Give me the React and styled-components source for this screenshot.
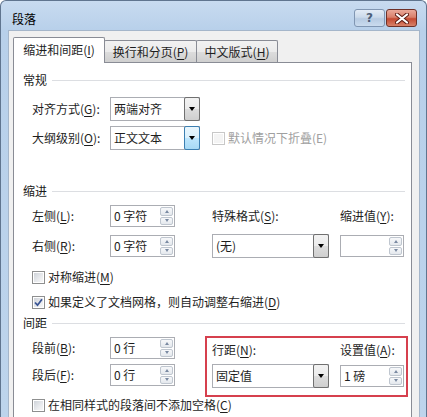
import React from "react";
import styled, { createGlobalStyle, css } from "styled-components";

const GlobalStyle = createGlobalStyle`
  html, body {
    margin: 0;
    padding: 0;
    background: #ffffff;
  }
  body {
    font-family: "Noto Sans CJK SC", "Noto Sans", sans-serif;
    font-size: 12px;
    color: #1e1e1e;
  }
  * {
    box-sizing: border-box;
  }
`;

function App() {
  return (
    <>
      <GlobalStyle />
      <Window>
        <TitleBar>
          <Title>段落</Title>
          <CaptionButtons>
            <CaptionButton $variant="help">
              <HelpGlyph>?</HelpGlyph>
            </CaptionButton>
            <CaptionButton $variant="close">
              <svg width="14" height="11" viewBox="0 0 14 11">
                <path
                  d="M2 1.5 L12 9.5 M12 1.5 L2 9.5"
                  stroke="#5a1a12"
                  strokeWidth="4"
                  strokeLinecap="round"
                />
                <path
                  d="M2 1.5 L12 9.5 M12 1.5 L2 9.5"
                  stroke="#ffffff"
                  strokeWidth="2.2"
                  strokeLinecap="round"
                />
              </svg>
            </CaptionButton>
          </CaptionButtons>
        </TitleBar>

        <Body>
          <TabList>
            <Tab $active $width={92}>
              缩进和间距(<U>I</U>)
            </Tab>
            <Tab $width={93}>
              换行和分页(<U>P</U>)
            </Tab>
            <Tab $width={82}>
              中文版式(<U>H</U>)
            </Tab>
          </TabList>

          <Panel>
            <SectionHeader $top={9}>
              <span>常规</span>
              <Rule />
            </SectionHeader>
            <Row $top={9}>
              <FieldLabel>
                对齐方式(<U>G</U>):
              </FieldLabel>
              <Select width={90} value="两端对齐" />
            </Row>
            <Row $top={5}>
              <FieldLabel>
                大纲级别(<U>O</U>):
              </FieldLabel>
              <Select width={90} value="正文文本" focused />
              <CheckItem $gap={3} $left={12}>
                <CheckBox disabled />
                <DisabledText>默认情况下折叠(E)</DisabledText>
              </CheckItem>
            </Row>

            <SectionHeader $top={33}>
              <span>缩进</span>
              <Rule />
            </SectionHeader>
            <IndentGrid>
              <FieldLabel>
                左侧(<U>L</U>):
              </FieldLabel>
              <Spinner width={65} value="0 字符" />
              <FieldLabel>
                特殊格式(<U>S</U>):
              </FieldLabel>
              <FieldLabel>
                缩进值(<U>Y</U>):
              </FieldLabel>

              <FieldLabel>
                右侧(<U>R</U>):
              </FieldLabel>
              <Spinner width={65} value="0 字符" />
              <Select width={117} value="(无)" />
              <Spinner width={64} value="" />
            </IndentGrid>

            <CheckRow $top={11}>
              <CheckBox />
              <span>
                对称缩进(<U>M</U>)
              </span>
            </CheckRow>
            <CheckRow $top={9}>
              <CheckBox checked />
              <span>
                如果定义了文档网格，则自动调整右缩进(<U>D</U>)
              </span>
            </CheckRow>

            <SectionHeader $top={5}>
              <span>间距</span>
              <Rule />
            </SectionHeader>
            <SpacingBlock>
              <SpacingColumn>
                <Row>
                  <FieldLabel>
                    段前(<U>B</U>):
                  </FieldLabel>
                  <Spinner width={65} value="0 行" />
                </Row>
                <Row>
                  <FieldLabel>
                    段后(<U>F</U>):
                  </FieldLabel>
                  <Spinner width={65} value="0 行" />
                </Row>
              </SpacingColumn>
              <Highlight>
                <FieldLabel>
                  行距(<U>N</U>):
                </FieldLabel>
                <FieldLabel>
                  设置值(<U>A</U>):
                </FieldLabel>
                <Select width={117} value="固定值" />
                <Spinner width={64} value="1 磅" />
              </Highlight>
            </SpacingBlock>
            <CheckRow $top={0}>
              <CheckBox />
              <span>
                在相同样式的段落间不添加空格(<U>C</U>)
              </span>
            </CheckRow>
          </Panel>
        </Body>
      </Window>
    </>
  );
}

function Select({ width, value, focused }) {
  return (
    <SelectBox style={{ width }}>
      <FieldText>{value}</FieldText>
      <DropButton $focused={focused}>
        <DownArrow />
      </DropButton>
    </SelectBox>
  );
}

function Spinner({ width, value }) {
  return (
    <SpinBox style={{ width }}>
      <FieldText>{value}</FieldText>
      <SpinButtons>
        <SpinButton>
          <SpinArrow $up />
        </SpinButton>
        <SpinButton>
          <SpinArrow />
        </SpinButton>
      </SpinButtons>
    </SpinBox>
  );
}

function CheckBox({ checked, disabled }) {
  return (
    <Box $disabled={disabled}>
      <BoxInner $disabled={disabled}>
        {checked && (
          <svg width="9" height="9" viewBox="0 0 9 9">
            <path
              d="M1 4.5 L3.5 7.2 L8 1.2"
              fill="none"
              stroke="#3b5695"
              strokeWidth="1.8"
            />
          </svg>
        )}
      </BoxInner>
    </Box>
  );
}

// STYLES FOR COMPONENTS
const Window = styled.div`
  width: 427px;
  height: 417px;
  overflow: hidden;
  display: flex;
  flex-direction: column;
  background: linear-gradient(180deg, #c8dbf0 0%, #b8d0ea 29px, #bdd4ec 100%);
  border: 1px solid #60758f;
  border-bottom: none;
  border-radius: 6px 6px 0 0;
`;

const TitleBar = styled.div`
  height: 29px;
  flex-shrink: 0;
  display: flex;
  justify-content: space-between;
  align-items: flex-start;
  padding: 0 9px 0 11px;
`;

const Title = styled.div`
  margin-top: 10px;
  line-height: 16px;
  color: #000000;
`;

const CaptionButtons = styled.div`
  display: flex;
  gap: 1px;
  margin-top: 8px;
`;

const CaptionButton = styled.div`
  width: 31px;
  height: 18px;
  border-radius: 3px;
  display: flex;
  align-items: center;
  justify-content: center;
  ${({ $variant }) =>
    $variant === "close"
      ? css`
          border: 1px solid #6e3128;
          background: linear-gradient(
            180deg,
            #eaa99a 0%,
            #d9806b 45%,
            #c44a32 55%,
            #d8826a 100%
          );
        `
      : css`
          border: 1px solid #8096b2;
          background: linear-gradient(
            180deg,
            #e3ecf6 0%,
            #cbdaea 45%,
            #b7cbe2 55%,
            #cadbee 100%
          );
        `}
`;

const HelpGlyph = styled.span`
  font-family: "DejaVu Sans", sans-serif;
  font-weight: bold;
  font-size: 12px;
  line-height: 12px;
  color: #4d5f78;
`;

const Body = styled.div`
  flex: 1;
  display: flex;
  flex-direction: column;
  margin: 0 6px 0 7px;
  padding: 6px 7px 0 4px;
  background: #f0f0f0;
  border: 1px solid #a5b6ca;
  border-bottom: none;
`;

const TabList = styled.div`
  display: flex;
  align-items: flex-end;
  height: 25px;
  flex-shrink: 0;
`;

const Tab = styled.div`
  width: ${({ $width }) => $width}px;
  display: flex;
  align-items: center;
  justify-content: center;
  line-height: 16px;
  border: 1px solid #898c95;
  border-bottom: none;
  border-radius: 2px 2px 0 0;
  ${({ $active }) =>
    $active
      ? css`
          height: 26px;
          margin-bottom: -1px;
          background: #ffffff;
          position: relative;
          z-index: 1;
          padding-bottom: 2px;
        `
      : css`
          height: 22px;
          margin-left: -1px;
          background: linear-gradient(
            180deg,
            #f2f2f2 0%,
            #ebebeb 50%,
            #dddddd 50%,
            #cfcfcf 100%
          );
        `}
`;

const Panel = styled.div`
  flex: 1;
  display: flex;
  flex-direction: column;
  background: #ffffff;
  border: 1px solid #898c95;
  border-bottom: none;
`;

const SectionHeader = styled.div`
  display: flex;
  align-items: center;
  gap: 5px;
  height: 16px;
  line-height: 16px;
  margin: ${({ $top }) => $top}px 6px 0 9px;
  color: #1a1a1a;
`;

const Rule = styled.div`
  flex: 1;
  height: 1px;
  background: #dcdee2;
`;

const Row = styled.div`
  display: flex;
  align-items: center;
  margin-top: ${({ $top = 0 }) => $top}px;
  padding-left: ${({ $top }) => ($top === undefined ? 0 : 18)}px;
`;

const FieldLabel = styled.span`
  width: 78px;
  flex-shrink: 0;
  line-height: 16px;
  white-space: nowrap;
`;

const U = styled.span`
  text-decoration: underline;
  text-underline-offset: 2px;
`;

const SelectBox = styled.div`
  height: 24px;
  display: flex;
  align-items: center;
  background: #ffffff;
  border: 1px solid #abadb3;
`;

const FieldText = styled.span`
  flex: 1;
  padding-left: 3px;
  line-height: 16px;
  white-space: nowrap;
`;

const DropButton = styled.span`
  width: 16px;
  height: 24px;
  margin-right: -1px;
  display: flex;
  align-items: center;
  justify-content: center;
  border: 1px solid ${({ $focused }) => ($focused ? "#3c7fb1" : "#707070")};
  border-radius: 2px;
  background: ${({ $focused }) =>
    $focused
      ? "linear-gradient(180deg, #eaf6fd 0%, #d9f0fc 50%, #bee6fd 50%, #a7d9f5 100%)"
      : "linear-gradient(180deg, #f2f2f2 0%, #ebebeb 50%, #dddddd 50%, #cfcfcf 100%)"};
`;

const DownArrow = styled.span`
  width: 0;
  height: 0;
  border-left: 3.5px solid transparent;
  border-right: 3.5px solid transparent;
  border-top: 4px solid #000000;
`;

const SpinBox = styled.div`
  height: 22px;
  display: flex;
  align-items: center;
  background: #ffffff;
  border: 1px solid #abadb3;
  padding-right: 1px;
`;

const SpinButtons = styled.div`
  width: 13px;
  height: 18px;
  display: flex;
  flex-direction: column;
  gap: 1px;
`;

const SpinButton = styled.span`
  flex: 1;
  display: flex;
  align-items: center;
  justify-content: center;
  border: 1px solid #bfc6cf;
  border-radius: 2px;
  background: linear-gradient(180deg, #f7f8fa 0%, #e4e8ed 100%);
`;

const SpinArrow = styled.span`
  width: 0;
  height: 0;
  border-left: 2.5px solid transparent;
  border-right: 2.5px solid transparent;
  ${({ $up }) =>
    $up
      ? css`
          border-bottom: 3px solid #7a8aa2;
        `
      : css`
          border-top: 3px solid #7a8aa2;
        `}
`;

const IndentGrid = styled.div`
  display: grid;
  grid-template-columns: 78px 102px 128px 64px;
  grid-template-rows: 22px 24px;
  row-gap: 7px;
  align-items: center;
  margin-top: 6px;
  padding-left: 18px;
`;

const CheckRow = styled.div`
  display: flex;
  align-items: center;
  gap: 3px;
  height: 16px;
  line-height: 16px;
  margin-top: ${({ $top }) => $top}px;
  padding-left: 18px;
  white-space: nowrap;
`;

const CheckItem = styled.div`
  display: flex;
  align-items: center;
  gap: ${({ $gap }) => $gap}px;
  margin-left: ${({ $left }) => $left}px;
  line-height: 16px;
`;

const DisabledText = styled.span`
  color: #a0a0a0;
  white-space: nowrap;
`;

const Box = styled.span`
  width: 13px;
  height: 13px;
  flex-shrink: 0;
  padding: 1px;
  border: 1px solid ${({ $disabled }) => ($disabled ? "#c8c8c8" : "#8e8f8f")};
  background: #ffffff;
`;

const BoxInner = styled.span`
  display: flex;
  align-items: center;
  justify-content: center;
  width: 100%;
  height: 100%;
  background: ${({ $disabled }) =>
    $disabled
      ? "#f4f4f4"
      : "linear-gradient(135deg, #cfd3d9 0%, #e9ebee 60%, #f7f7f7 100%)"};
`;

const SpacingBlock = styled.div`
  display: flex;
  align-items: flex-start;
  margin-top: 5px;
  padding-left: 18px;
`;

const SpacingColumn = styled.div`
  width: 143px;
  margin-right: 30px;
  padding-top: 1px;
  display: flex;
  flex-direction: column;
  gap: 5px;
  & > div {
    height: 22px;
  }
`;

const Highlight = styled.div`
  display: grid;
  grid-template-columns: 128px 64px;
  grid-template-rows: 16px 24px;
  row-gap: 6px;
  align-items: center;
  padding: 4px 2px 7px 5px;
  border: 2px solid #d6404e;
`;

export default App;
